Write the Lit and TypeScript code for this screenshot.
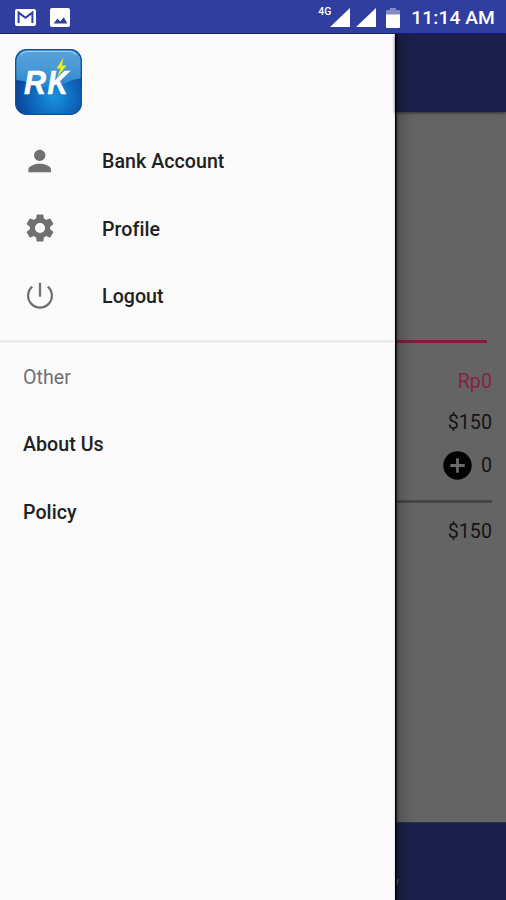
import { LitElement, html, css, svg } from "lit";
import { customElement } from "lit/decorators.js";

const gear = svg`<path d="M19.14 12.94c.04-.3.06-.61.06-.94s-.02-.64-.07-.94l2.03-1.58a.5.5 0 0 0 .12-.61l-1.92-3.32a.49.49 0 0 0-.59-.22l-2.39.96a7 7 0 0 0-1.62-.94l-.36-2.54a.48.48 0 0 0-.48-.41h-3.84a.47.47 0 0 0-.47.41l-.36 2.54c-.59.24-1.13.57-1.62.94l-2.39-.96a.48.48 0 0 0-.59.22L2.74 8.87a.47.47 0 0 0 .12.61l2.03 1.58c-.05.3-.09.63-.09.94s.02.64.07.94l-2.03 1.58a.5.5 0 0 0-.12.61l1.92 3.32c.12.22.37.29.59.22l2.39-.96c.5.38 1.03.7 1.62.94l.36 2.54c.05.24.24.41.48.41h3.84c.24 0 .44-.17.47-.41l.36-2.54a7 7 0 0 0 1.62-.94l2.39.96c.22.08.47 0 .59-.22l1.92-3.32a.47.47 0 0 0-.12-.61zM12 15.6A3.6 3.6 0 1 1 12 8.4a3.6 3.6 0 0 1 0 7.2z"/>`;
const person = svg`<path d="M12 12c2.21 0 4-1.79 4-4s-1.79-4-4-4-4 1.79-4 4 1.79 4 4 4zm0 2c-2.67 0-8 1.34-8 4v2h16v-2c0-2.66-5.33-4-8-4z" transform="translate(-.2 0)"/>`;
const power = svg`<path d="M12 2.7v9.8M6.5 5.4a8.4 8.4 0 1 0 11 0" fill="none" stroke="#707070" stroke-width="1.6"/>`;

@customElement("status-bar")
class StatusBar extends LitElement {
  static styles = css`
    :host { display: flex; justify-content: space-between; height: 34px; box-sizing: border-box; background: #303f9f; color: #fff; border-bottom: 1px solid #1b1f97; }
    svg { display: block; fill: #fff; }
    .left { display: flex; gap: 14px; padding: 8px 0 0 15px; }
    .right { display: flex; padding-top: 8px; }
    .net { font: 500 10.5px/10px Roboto, sans-serif; margin-top: -1px; width: 12px; }
    .sig2 { margin-left: 6px; }
    .bat { margin-left: 10px; }
    .time { font: 500 19.2px/22px Roboto, sans-serif; letter-spacing: .1px; margin: -1px 11px 0 11px; white-space: nowrap; }
  `;
  render() {
    return html`
      <div class="left">
        <svg width="21" height="18" viewBox="0 0 21 18"><rect y="1" width="21" height="17" rx="2"/><path d="M3.6 15V4.6l6.9 5.2 6.9-5.2V15" fill="none" stroke="#303f9f" stroke-width="2"/></svg>
        <svg width="20" height="19" viewBox="0 0 20 19"><rect width="20" height="19" rx="2"/><path d="M3.5 15.5l4-5 2.7 3 3.6-4.2 3.5 6.2z" fill="#303f9f"/></svg>
      </div>
      <div class="right">
        <span class="net">4G</span>
        <svg width="20" height="19" viewBox="0 0 20 19"><path d="M20 0v19H0z"/></svg>
        <svg class="sig2" width="20" height="19" viewBox="0 0 20 19"><path d="M20 0v19H0z"/></svg>
        <svg class="bat" width="14" height="20" viewBox="0 0 14 20"><path d="M4 0h6v2h3a1 1 0 0 1 1 1v4H0V3a1 1 0 0 1 1-1h3z" opacity=".4"/><path d="M0 6.5h14V19a1 1 0 0 1-1 1H1a1 1 0 0 1-1-1z"/></svg>
        <span class="time">11:14 AM</span>
      </div>`;
  }
}

@customElement("nav-drawer")
class NavDrawer extends LitElement {
  static styles = css`
    :host { display: flex; flex-direction: column; width: 395px; box-sizing: border-box; background: #fafafa; border-right: 1px solid #e9e9e9; font: 500 19.6px Roboto, sans-serif; color: #212121; letter-spacing: .05px; }
    .logo { display: block; margin: 14px 0 0 14px; flex: none; }
    .menu { padding-top: 11px; }
    .row { display: flex; align-items: center; height: 67.5px; padding: 2px 0 0 23px; box-sizing: border-box; }
    .icon { width: 34px; height: 34px; fill: #707070; margin: -2px 45px 0 0; }
    .rule { height: 3px; background: #ebebeb; margin-top: 10px; }
    .muted { color: #707070; font-weight: 400; }
    .mark { font: italic 700 33px "Liberation Sans", sans-serif; }
  `;
  render() {
    return html`
      <svg class="logo" width="69" height="68" viewBox="0 0 69 68">
        <defs>
          <linearGradient id="top" x2="0" y2="1"><stop stop-color="#58a3dd"/><stop offset=".5" stop-color="#4a99d5"/><stop offset="1" stop-color="#2386d0"/></linearGradient>
          <radialGradient id="low" cx=".58" cy=".72" r=".62"><stop stop-color="#1793df"/><stop offset=".5" stop-color="#0e68bd"/><stop offset="1" stop-color="#083b91"/></radialGradient>
          <clipPath id="tile"><rect x="1.5" y="1.5" width="66" height="65" rx="11"/></clipPath>
        </defs>
        <g clip-path="url(#tile)">
          <rect width="69" height="68" fill="url(#low)"/>
          <path d="M0 0h69v30Q59 31 49 36Q34 43 18 36Q9 32 0 32z" fill="url(#top)"/>
        </g>
        <rect x="1.7" y="1.7" width="65.6" height="64.6" rx="11" fill="none" stroke="#0c519c" stroke-width="1.3"/>
        <path d="M7 7Q9 3.5 14 3.5h41q5 0 7 3.5" fill="none" stroke="#9bd3f2" stroke-width="1.2"/>
        <text class="mark" x="10" y="45.5" textLength="22" lengthAdjust="spacingAndGlyphs" fill="#fff" stroke="#fff" stroke-width=".6">R</text>
        <text class="mark" x="33.5" y="45.5" textLength="20.5" lengthAdjust="spacingAndGlyphs" fill="#fff" stroke="#fff" stroke-width=".6">K</text>
        <path d="M49.5 9.5L42.5 20.500h4L43 29.500 52.500 17.500h-4.500z" fill="#f3eb1e"/>
      </svg>
      <div class="menu">
        ${[["Bank Account", person], ["Profile", gear], ["Logout", power]].map(
          ([label, icon]) => html`<div class="row"><svg class="icon" viewBox="0 0 24 24">${icon}</svg>${label}</div>`
        )}
      </div>
      <div class="rule"></div>
      <div class="row muted">Other</div>
      <div class="row">About Us</div>
      <div class="row">Policy</div>`;
  }
}

@customElement("order-page")
class OrderPage extends LitElement {
  static styles = css`
    :host { display: flex; flex-direction: column; flex: 1; min-width: 0; position: relative; background: #646464; color: #151515; font: 400 19.7px/24px Roboto, sans-serif; }
    :host::after { content: ""; position: absolute; inset: 0 auto 0 0; width: 18px; background: linear-gradient(90deg, #000 0 1px, #0005 2px, #0002 5px, #0000); }
    .head { height: 78px; background: #1a204b; box-shadow: 0 1px 3px #0008; }
    .body { flex: 1; padding-top: 228px; }
    .pink { height: 3px; background: #7f1c40; margin-right: 19px; }
    .val { text-align: right; padding-right: 14px; }
    .rp { color: #8a2145; margin-top: 27px; }
    .price { margin-top: 17px; }
    .qty { display: flex; align-items: center; justify-content: flex-end; gap: 9px; height: 30px; margin-top: 16px; }
    .qty svg { margin-top: -1px; }
    .line { height: 3px; background: #454545; margin: 19px 14px 0 0; }
    .total { margin-top: 17px; }
    .foot { height: 78px; background: #1a204b; border-top: 1px solid #2c3152; box-sizing: border-box; padding-top: 49px; }
    .clip { display: block; width: 4px; height: 14px; margin-top: 5px; }
  `;
  render() {
    return html`
      <div class="head"></div>
      <div class="body">
        <div class="pink"></div>
        <div class="val rp">Rp0</div>
        <div class="val price">$150</div>
        <div class="val qty">
          <svg width="29" height="29" viewBox="0 0 29 29"><circle cx="14.5" cy="14.5" r="14.2" fill="#020202"/><path d="M14.5 7.3v14.4M7.3 14.5h14.4" stroke="#6a6a6a" stroke-width="2.8"/></svg>
          <span>0</span>
        </div>
        <div class="line"></div>
        <div class="val total">$150</div>
      </div>
      <div class="foot"><svg class="clip" viewBox="0 0 4 14"><path d="M3.4 2L1.4 8" stroke="#62667c" stroke-width="1.3"/></svg></div>`;
  }
}

@customElement("app-root")
class AppRoot extends LitElement {
  static styles = css`
    :host { display: flex; flex-direction: column; width: 506px; height: 900px; overflow: hidden; }
    .main { display: flex; flex: 1; }
  `;
  render() {
    return html`<status-bar></status-bar><div class="main"><nav-drawer></nav-drawer><order-page></order-page></div>`;
  }
}
